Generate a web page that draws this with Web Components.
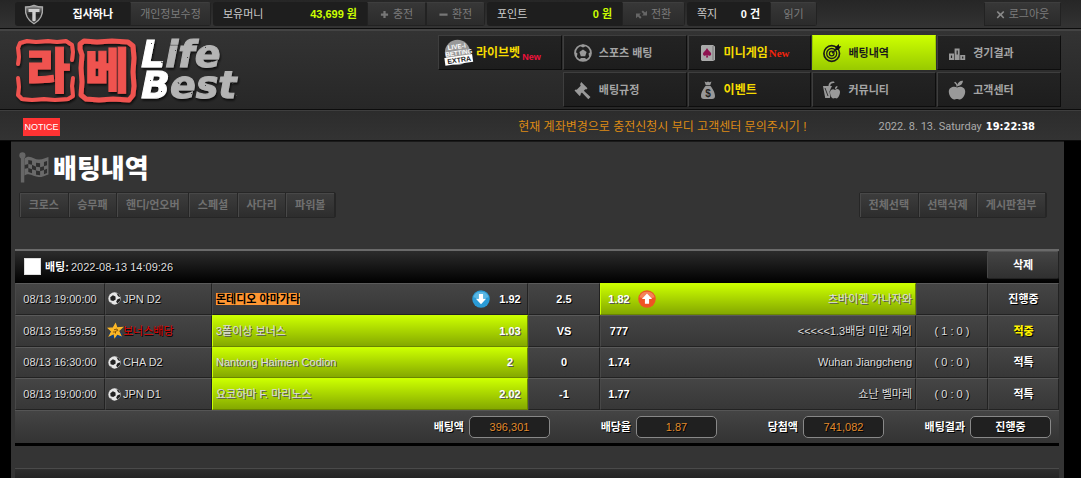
<!DOCTYPE html>
<html lang="ko">
<head>
<meta charset="utf-8">
<title>Life Best - 배팅내역</title>
<style>
  html, body { margin: 0; background: #000; }
  body { font: 11px/16px "Liberation Sans", "Noto Sans CJK KR", sans-serif; color: #ddd; overflow: hidden auto; }
</style>
</head>
<body>
<betting-app></betting-app>
<script>
const define = (name, html, setup) => {
  const t = document.createElement('template');
  t.innerHTML = html;
  customElements.define(name, class extends HTMLElement {
    connectedCallback() {
      if (this.shadowRoot) return;
      this.attachShadow({ mode: 'open' }).append(t.content.cloneNode(true));
      if (setup) setup(this, this.shadowRoot);
    }
  });
};

const ICONS = {
  shield: `<defs><linearGradient id="g" x1="0" y1="0" x2="0" y2="1"><stop offset="0" stop-color="#999"/><stop offset=".5" stop-color="#222"/><stop offset="1" stop-color="#444"/></linearGradient></defs><path d="M1.5 2.5Q6 2.5 10 .8q4 1.7 8.500 1.700Q19.500 14 10 19.300.5 14 1.500 2.500z" fill="url(#g)" stroke="#aaa" stroke-width="1.300"/><path d="M4.500 4.500h11v3h-3.800v8.500L10 17l-1.700-1V7.500H4.500z" fill="#d0d0d0"/>`,
  plus: `<path d="M7.500 2h5v5.500H18v5h-5.500V18h-5v-5.500H2v-5h5.500z" fill="#777"/>`,
  minus: `<path d="M1 7.500h18v5H1z" fill="#777"/>`,
  swap: `<path d="M0 8h9l-3 3 4 4-2.500 2.500-4-4L0 17zM20 12h-9l3-3-4-4 2.500-2.500 4 4L20 3z" fill="#666"/>`,
  cross: `<path d="M4 2l6 5.500L16 2l2.500 2.500L13 10.500l5.500 6L16 19l-6-6-6 6-2.500-2.500 5.500-6-5.500-6z" fill="#888"/>`,
  live: `<circle cx="10" cy="9.500" r="9" fill="#999"/><g transform="rotate(-8 10 10)" font-family="Liberation Sans" font-weight="bold" fill="#fff"><text x="3.500" y="7" font-size="4.600">LIVE-i</text><text x="1.300" y="11.500" font-size="4.400">BETTING</text><path d="M.2 12.200h20v5.600H.2z"/><text x="2" y="16.800" font-size="5" fill="#222">EXTRA</text></g>`,
  soccer: `<circle cx="10" cy="10" r="8" fill="none" stroke="#999" stroke-width="1.700"/><path d="M10 6.500l3.600 2.600-1.400 4.200H7.800L6.400 9.100zM6.300 2.700L10 4.600l3.700-1.900L10 1.500zM2 8.500l2.500 2-.8 4L1.800 11zM18 8.500l-2.500 2 .8 4 1.900-3.500zM6.500 17l1.300-2h4.400l1.300 2-3.500 1z" fill="#999"/>`,
  gavel: `<path d="M8.200 2l6.300 6.300-1.200 1.200-1-.3-1.500 1.500 6.700 6.300-2.200 2.200-6.400-6.700-1.400 1.400.3 1-1.200 1.200L1.500 10.600l1.200-1.200 1 .3 4-4-.6-1.400z" fill="#999"/>`,
  card: `<path d="M4 2h11l2 1.500V17l-2 1H4l-1-1V3z" fill="#aaa"/><path d="M15 3v14" stroke="#777"/><path d="M9 5C7.500 8 5 9 5 11c0 2 2.400 2.300 3.500 1L8 14.500h2.200L9.600 12c1.300 1.300 3.600 1 3.600-1 0-2-2.700-3-4.200-6z" fill="#8e1350"/>`,
  bag: `<path d="M6.500 1.500l2 .8L10 1.500l1.500.8 2-.8-1.300 3.700H7.800zM7.500 6h5c1.500 2 4.500 6 4.500 10 0 2-1 3-3 3H6c-2 0-3-1-3-3 0-4 3-8 4.500-10z" fill="#999"/><text x="10" y="16.500" font-family="Liberation Sans" font-size="10" font-weight="bold" text-anchor="middle" fill="#222">$</text>`,
  target: `<g fill="none" stroke="#1b1b1b"><circle cx="9.700" cy="10.500" r="7.800" stroke-width="1.700"/><circle cx="9.700" cy="10.500" r="5" stroke-width="1.300"/><circle cx="9.700" cy="10.500" r="2.300" stroke-width="1.300"/><path d="M10 10.300l6-6" stroke-width="1.600"/></g><path d="M13.500 4l3.500-3v2.300h2.300L16.500 7h-3z" fill="#111"/>`,
  podium: `<path d="M2 10.500h5v6.500H2zM7.600 5.500h5V17h-5zM13.200 12h5v5h-5z" fill="#999"/><path d="M10.200 7.500v4M4.500 12.500v2.500M15.700 13.500v2" stroke="#222" stroke-width="1.200"/>`,
  snack: `<path d="M1 6h9l-1 2-1.500 3.500.8 5L7.800 18H3.200zM6.500 6c.2-2.500 1-4.500 5.500-4.500l.6 1.500C9 3 8.500 4 8.300 6z" fill="#999"/><path d="M13 10c1.500-2 5-1 5 1.800C18 15 16 18.500 14.600 18.500c-.8 0-1-.4-1.600-.4s-1 .4-1.800.4C9.500 18.500 8 15 8 12.300c0-2.800 3.500-4 5-2.300zM13 9c-.3-1.500.7-3 2.500-3 0 1.700-1 3-2.500 3z" fill="#999"/><path d="M3 8l3 8" stroke="#333"/>`,
  apple: `<path d="M10.200 7.500c2.500-1.700 8-.8 8 4 0 4-3 8-5.400 8-1 0-1.500-.6-2.800-.6s-1.800.6-2.800.6c-2.400 0-5.400-4-5.400-8 0-4.800 5.800-5.700 8.400-4zM9.600 7C9.500 4.500 8.500 3.500 7 2.700l1.300-.9c1 .9 1.700 1.700 2 3C11 2.500 13 .5 16 .8c-.3 3-2 5-5.500 5.400z" fill="#999"/>`,
  flag: `<circle cx="2.200" cy="2.500" r="2" fill="#666"/><path d="M1.200 3h2.200v17H1.200z" fill="#666"/><path d="M3.500 4.500C7 1.500 10 5.500 13 5.200c2.500-.2 4-1.200 6-1.700v11.300c-2 .7-4 1.700-6.300 1.700-3 0-5.700-3.300-9.200-1z" fill="#6a6a6a"/><path d="M6 5.500l2.400.5v2.600L6 8zM11 7.200l2.600.3v2.700L11 9.900zM16.100 6.800l2-.6v2.600l-2 .7zM8.400 8.600l2.600 1.300v2.400l-2.600-.9zM13.600 10.200l2.500-.7v2.500l-2.500.7zM3.700 8.700L6 8v2.600l-2.300.6zM6 10.600l2.400.8V14L6 13.200zM11 12.300l2.600.4v2.600l-2.600-.3zM16.100 12l2-.8v2.600l-2 .8z" fill="#2f2f2f"/>`,
  ball: `<circle cx="10" cy="10" r="9.500" fill="#e6e6e6"/><path d="M3.500 8l4-3 4 2 .3 4.500L8 14l-4-1.500zM13 1.500l4 2.500 2 4-3.500-1.500zM14.500 11l4.500-1.500-.5 4.500-4 3.500-2-2.500zM2 15l3 1 2 3z" fill="#222"/>`,
  star: `<path d="M1 13h18l-1 6.500H2z" fill="#143f7a"/><path d="M10 1l2 5.500 7-.5-5 4.500 3 6-4.800-2L9 19l-1-5-6 3 3-6L.5 7 7 6.500z" fill="#fdb827" stroke="#fdb827" stroke-width="1.500"/><path d="M8 9l4-1 1 2-3 1v3M6.500 12h3" stroke="#7a4a00" fill="none" stroke-width="1.200"/>`,
  down: `<circle cx="10" cy="10" r="9.700" fill="#2a9bd6"/><path d="M1.500 8A9 9 0 0 1 18.500 8Q10 11 1.500 8z" fill="#5ab6e2"/><path d="M7.700 4.500h4.600v5.200h3.400L10 15.800 4.300 9.700h3.400z" fill="#fff"/>`,
  up: `<circle cx="10" cy="10" r="9.700" fill="#ee5424"/><path d="M1.500 8A9 9 0 0 1 18.500 8Q10 11 1.500 8z" fill="#f4835a"/><path d="M7.700 15.300h4.600v-5.200h3.400L10 4 4.300 10.100h3.400z" fill="#fff"/>`
};

define('ui-icon', `<style>:host{display:block;flex:none;width:20px;height:20px}svg{display:block;width:100%;height:100%;overflow:visible}</style>`,
  (el, root) => root.append(document.createRange().createContextualFragment(
    `<svg viewBox="0 0 20 20" aria-hidden="true">${ICONS[el.getAttribute('name')]}</svg>`)));

define('bar-button', `<style>
  :host{display:flex}
  button{flex:1;display:flex;align-items:center;justify-content:center;gap:4px;padding:0;margin:0;border:1px solid #222;border-top-color:#3e3e3e;
    background:linear-gradient(#373737,#2b2b2b);font:inherit;color:#7c7c7c;cursor:pointer;white-space:nowrap}
  ::slotted(ui-icon){width:9px;height:9px}
</style><button type="button"><slot></slot></button>`);

define('stat-box', `<style>
  :host{display:flex;align-items:center;justify-content:space-between;box-sizing:border-box;padding:0 10px;background:#1e1e1e;color:#ccc}
  b{color:var(--value,#fff)}
</style><slot></slot><b><slot name="value"></slot></b>`);

define('top-bar', `<style>
  :host{display:flex;box-sizing:border-box;height:29px;padding:2px 20px 2px 15px;background:linear-gradient(#262626,#333);border-bottom:1px solid #0c0c0c}
  .group{display:flex;margin-right:2px;border-radius:3px;overflow:hidden}
  .user{width:115px}.edit{width:81px}.money{width:154px}.act{width:59px}.point{width:135px}.swap{width:63px}.note{width:83px}.read{width:47px}
  .out{width:77px;margin-left:auto}
  .user{padding:0 17px 0 9px}
  .point,.money{--value:#cf0}
  .shield{width:20px;height:21px}
  .swap ui-icon{width:11px;height:11px}
</style>
<div class="group"><stat-box class="user"><ui-icon class="shield" name="shield"></ui-icon><span slot="value">집사하나</span></stat-box><bar-button class="edit">개인정보수정</bar-button></div>
<div class="group"><stat-box class="money">보유머니<span slot="value">43,699 원</span></stat-box><bar-button class="act"><ui-icon name="plus"></ui-icon>충전</bar-button><bar-button class="act"><ui-icon name="minus"></ui-icon>환전</bar-button></div>
<div class="group"><stat-box class="point">포인트<span slot="value">0 원</span></stat-box><bar-button class="swap"><ui-icon name="swap"></ui-icon>전환</bar-button></div>
<div class="group"><stat-box class="note">쪽지<span slot="value">0 건</span></stat-box><bar-button class="read">읽기</bar-button></div>
<bar-button class="out"><ui-icon name="cross"></ui-icon>로그아웃</bar-button>`);

define('site-logo', `<style>:host{display:block;width:236px;height:70px}svg{display:block;overflow:visible}</style>
<svg width="236" height="70" viewBox="0 0 236 70" role="img" aria-label="라베 Life Best">
  <defs><filter id="s" x="-5%" y="-5%" width="115%" height="120%"><feDropShadow dx="1" dy="2" stdDeviation="1" flood-color="#000" flood-opacity=".7"/></filter></defs>
  <g filter="url(#s)">
    <g fill="none" stroke="#ef5350" stroke-width="4" stroke-linejoin="round" stroke-linecap="round">
      <path d="M3 29l1-7-1-9 2-5 7-2 9 1 12-1 9 1 9-1 6 4 1 7-1 8"/>
      <path d="M3 43l1 9-1 8 4 4 10 1 12-1 11 1 13-1 5-3-1-10 1-8"/>
      <path d="M65 9l4-3 13 1 15-1 16 1 5 4 1 12-1 14 1 14-1 9-4 5-16-1-14 1-13-1-5-4 1-13-1-14 1-13-2-6z" stroke-width="5"/>
    </g>
    <g fill="#ef5350" stroke="#ef5350" stroke-width="1" font-family="Noto Sans CJK KR" font-weight="900" font-size="48" text-anchor="middle">
      <text x="33" y="53">라</text><text x="92" y="53">베</text>
    </g>
    <g font-family="DejaVu Sans" font-weight="bold" font-style="oblique" font-size="38" stroke-width="1">
      <text x="126" y="32" fill="#b4b4b4" stroke="#b4b4b4"><tspan fill="#fff" stroke="#fff">L</tspan>ife</text>
      <text x="126" y="63" fill="#b4b4b4" stroke="#b4b4b4"><tspan fill="#fff" stroke="#fff">B</tspan>est</text>
    </g>
  </g>
  <path d="M136 8l1 1M146 27l2 1M160 15l1 1M172 22l1 1M190 12l1 1M196 26l1 1M135 45l1 1M146 56l1 1M163 47l1 2M176 58l1 1M190 50l1 1M217 47l1 2M221 60l1 1" stroke="#444" stroke-width="1"/>
</svg>`);

define('nav-item', `<style>
  :host{display:block}
  a{display:flex;align-items:center;gap:6px;box-sizing:border-box;height:35px;padding-left:9px;text-decoration:none;white-space:nowrap;
    color:#a5a5a5;font-weight:bold;font-size:11px;background:linear-gradient(#232323,#1d1d1d);border:1px solid #0d0d0d;border-left-color:#3e3e3e;border-top-color:#3e3e3e}
  :host([hot]) a{color:#f6dc00;font-size:12px}
  :host([active]) a{color:#1a1a1a;background:linear-gradient(#cf0,#9acb00);border-color:#cf0 #9acb00 #9acb00}
  :host([live]) a{padding-left:4px;gap:4px}
  :host([live]) ::slotted(ui-icon){width:29px;height:28px}
</style><a href="#"><slot></slot></a>`);

define('site-header', `<style>
  :host{display:flex;justify-content:space-between;box-sizing:border-box;height:81px;padding:4px 20px 0 15px;border-top:2px solid #444;border-bottom:1px solid #0c0c0c;background:linear-gradient(#333,#272727)}
  nav{display:grid;grid-template-columns:repeat(5,1fr);grid-auto-rows:35px;gap:2px 1px;width:623px}
  .second{grid-column-start:2}
  .sans,.serif{color:#f0123c;font-size:9px;margin-left:-5px}
  .sans{padding-top:9px;margin-left:-2px}
  .serif{font-family:"Liberation Serif",serif;font-size:11px;color:#f2230c}
</style>
<site-logo></site-logo>
<nav>
  <nav-item hot live><ui-icon name="live"></ui-icon>라이브벳<span class="sans">New</span></nav-item>
  <nav-item><ui-icon name="soccer"></ui-icon>스포츠 배팅</nav-item>
  <nav-item hot><ui-icon name="card"></ui-icon>미니게임<span class="serif">New</span></nav-item>
  <nav-item active><ui-icon name="target"></ui-icon>배팅내역</nav-item>
  <nav-item><ui-icon name="podium"></ui-icon>경기결과</nav-item>
  <nav-item class="second"><ui-icon name="gavel"></ui-icon>배팅규정</nav-item>
  <nav-item hot><ui-icon name="bag"></ui-icon>이벤트</nav-item>
  <nav-item><ui-icon name="snack"></ui-icon>커뮤니티</nav-item>
  <nav-item><ui-icon name="apple"></ui-icon>고객센터</nav-item>
</nav>`);

define('notice-bar', `<style>
  :host{display:flex;align-items:center;box-sizing:border-box;height:31px;padding:2px 46px 0 23px;border-top:1px solid #3e3e3e;border-bottom:1px solid #0c0c0c;background:linear-gradient(#2c2c2c,#333)}
  .tag{background:#f33;color:#fff;font-size:9px;line-height:18px;width:37px;text-align:center}
  .msg{margin-left:auto;color:#dc8a14;font-size:12px}
  .date{margin-left:72px;font-family:Roboto,sans-serif;color:#aaa}
  time{margin-left:4px;color:#fff;font-family:"DejaVu Sans Condensed","DejaVu Sans",sans-serif;font-weight:bold}
</style>
<span class="tag">NOTICE</span><span class="msg">현재 계좌변경으로 충전신청시 부디 고객센터 문의주시기 !</span><span class="date">2022. 8. 13. Saturday</span><time>19:22:38</time>`);

define('page-title', `<style>
  :host{display:flex;gap:3px;height:41px;padding:9px 0 0 4px}
  ui-icon{width:31px;height:32px}
  h1{margin:0;font-size:26px;line-height:36px;font-weight:900;color:#fff}
</style><ui-icon name="flag"></ui-icon><h1><slot></slot></h1>`);

define('button-strip', `<style>
  :host{display:flex;border:1px solid #262626;border-radius:2px}
  ::slotted(button){flex:1 0 auto;height:24px;padding:0 8px;border:1px solid #262626;border-width:0 1px 0 0;box-shadow:inset 1px 1px #484848;margin:0;background:linear-gradient(#3d3d3d,#2d2d2d);color:#707070;font:bold 11px/16px "Liberation Sans","Noto Sans CJK KR",sans-serif;white-space:nowrap}
</style><slot></slot>`);

const rows = [
  { t: '08/13 19:00:00', i: 'ball', l: 'JPN D2', h: '<mark>몬테디오 야마가타</mark>', ho: '1.92', ha: 'down', m: '2.5', ao: '1.82', aa: 'up', a: '츠바이겐 가나자와', s: '', r: '진행중', win: 'away' },
  { t: '08/13 15:59:59', i: 'star', l: '<em>보너스배당</em>', h: '3폴이상 보너스', ho: '1.03', m: 'VS', ao: '777', a: '&lt;&lt;&lt;&lt;&lt;1.3배당 미만 제외', s: '( 1 : 0 )', r: '<strong>적중</strong>', win: 'home' },
  { t: '08/13 16:30:00', i: 'ball', l: 'CHA D2', h: 'Nantong Haimen Codion', ho: '2', m: '0', ao: '1.74', a: 'Wuhan Jiangcheng', s: '( 0 : 0 )', r: '적특', win: 'home' },
  { t: '08/13 19:00:00', i: 'ball', l: 'JPN D1', h: '요코하마 F. 마리노스', ho: '2.02', m: '-1', ao: '1.77', a: '쇼난 벨마레', s: '( 0 : 0 )', r: '적특', win: 'home' }
];
const arrow = n => n ? `<ui-icon class="arrow" name="${n}"></ui-icon>` : '';

define('bet-table', `<style>
  :host{display:block}
  table{width:100%;height:127px;table-layout:fixed;border-collapse:separate;border-spacing:0;text-shadow:1px 1px #000}
  td{padding:0;box-sizing:border-box;text-align:center;white-space:nowrap;background:linear-gradient(#454545,#373737);
    border:1px solid;border-color:#5a5a5a #222 #222 #484848}
  td.win{background:linear-gradient(#cf0,#84a800);border-color:#cf0 #6a8600 #6a8600 #cf0;text-shadow:1px 1px #555}
  .c1{width:90px}.c2{width:107px}.c4,.c6{width:72px}.c7{width:71px}
  div{display:flex;align-items:center;height:18px;padding:0 3px}
  .league{gap:2px;padding-left:2px}
  .league ui-icon{width:13px;height:13px}
  .league ui-icon.star{width:15px;height:15px}
  .league .star+span{margin-left:-2px}
  b{color:#fff}
  .team b{width:26px;text-align:center}
  .home{padding-right:4px}.home b{margin-left:7px}.home>:nth-child(2){margin-left:auto}
  .away{padding-left:5px}.away b{margin-right:6px}.away span{margin-left:auto}
  .arrow{width:18px;height:18px}
  mark{background:#ff9632;color:#000;font-weight:bold;line-height:12px;display:block;text-shadow:none}
  em{font-style:normal;color:#d00}
  strong{color:#fff200}
</style><table><colgroup><col class="c1"><col class="c2"><col><col class="c4"><col><col class="c6"><col class="c7"></colgroup><tbody>${
rows.map(r => `<tr><td>${r.t}</td><td><div class="league"><ui-icon class="${r.i}" name="${r.i}"></ui-icon><span>${r.l}</span></div></td>
<td class="${r.win === 'home' ? 'win' : ''}"><div class="team home"><span>${r.h}</span>${arrow(r.ha)}<b>${r.ho}</b></div></td><td><b>${r.m}</b></td>
<td class="${r.win === 'away' ? 'win' : ''}"><div class="team away"><b>${r.ao}</b>${arrow(r.aa)}<span>${r.a}</span></div></td><td>${r.s}</td><td><b>${r.r}</b></td></tr>`).join('')
}</tbody></table>`);

define('sum-field', `<style>
  :host{display:flex;justify-content:flex-end;align-items:center;gap:5px;font-weight:bold;color:#fff}
  output{box-sizing:border-box;width:81px;height:22px;line-height:20px;border:1px solid #888;border-radius:5px;background:#202020;text-align:center;color:#e08a2c;font-weight:normal}
  :host([plain]) output{font-weight:bold;color:#fff}
</style><label for="o"><slot></slot></label><output id="o"><slot name="value"></slot></output>`);

define('bet-slip', `<style>
  :host{display:block;border-top:2px solid #6a6a6a}
  header{display:flex;align-items:flex-start;justify-content:space-between;height:32px;background:linear-gradient(#2c2c2c,#000);text-shadow:1px 1px #000}
  label{display:flex;align-items:center;padding:7px 0 0 9px}
  input{appearance:none;width:17px;height:17px;margin:0 4px 0 0;background:#fff;border:1px solid #ddd}
  b{color:#fff}
  time{margin-left:2px}
  button{width:72px;height:28px;margin:0;padding:0;border:1px solid;border-color:#555 #222 #222 #484848;border-radius:2px;background:linear-gradient(#444,#303030);color:#fff;font:bold 11px/16px "Liberation Sans","Noto Sans CJK KR",sans-serif}
  footer{display:grid;grid-template-columns:repeat(4,167px);justify-content:end;box-sizing:border-box;height:36px;padding-right:8px;border-top:1px solid #555;border-bottom:3px solid #000;background:linear-gradient(#444,#333);text-shadow:1px 1px #000}
</style>
<header><label><input type="checkbox"><b>배팅:</b><time>2022-08-13 14:09:26</time></label><button type="button">삭제</button></header>
<bet-table></bet-table>
<footer><sum-field>배팅액<span slot="value">396,301</span></sum-field><sum-field>배당율<span slot="value">1.87</span></sum-field><sum-field>당첨액<span slot="value">741,082</span></sum-field><sum-field plain>배팅결과<span slot="value">진행중</span></sum-field></footer>`);

define('betting-app', `<style>
  :host{display:flex;flex-direction:column;min-height:100vh}
  main{flex:1;display:flex;flex-direction:column;margin:0 17px 0 11px;padding:0 5px 0 4px;border-top:1px solid #1a1a1a;background:#343434}
  .tools{display:flex;justify-content:space-between;padding:0 12px 0 4px;margin-bottom:31px}
  .filters{width:315px}
  .actions{width:186px}
  section{flex:1;margin-top:22px;border-top:1px solid #4a4a4a;background:linear-gradient(#2e2e2e,#242424)}
</style>
<top-bar></top-bar><site-header></site-header><notice-bar></notice-bar>
<main>
  <page-title>배팅내역</page-title>
  <div class="tools">
    <button-strip class="filters"><button>크로스</button><button>승무패</button><button>핸디/언오버</button><button>스페셜</button><button>사다리</button><button>파워볼</button></button-strip>
    <button-strip class="actions"><button>전체선택</button><button>선택삭제</button><button>게시판첨부</button></button-strip>
  </div>
  <bet-slip></bet-slip>
  <section></section>
</main>`);
</script>
</body>
</html>
